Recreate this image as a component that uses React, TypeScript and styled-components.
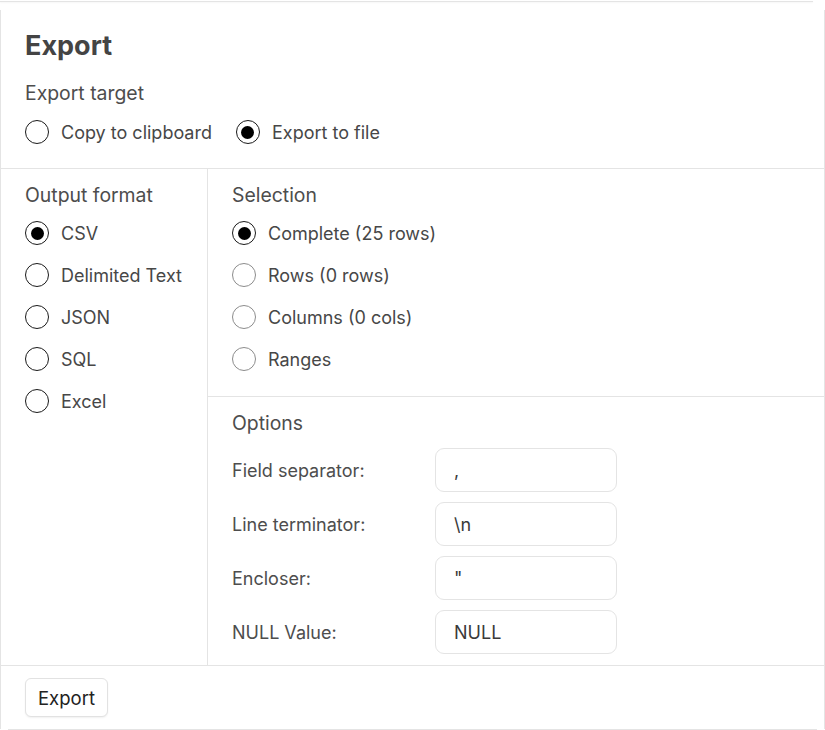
import React from "react";
import styled, { createGlobalStyle } from "styled-components";

const Global = createGlobalStyle`
  html, body { margin: 0; padding: 0; background: #fff; }
  body { font-family: Inter, "Noto Sans", sans-serif; color: #444; }
  * { box-sizing: border-box; }
`;

const Page = styled.div`
  width: 825px;
  height: 730px;
  display: flex;
  flex-direction: column;
  overflow: hidden;
`;

const TopRule = styled.div`
  height: 2px;
  margin-right: 12px;
  border-bottom: 1px solid #e4e4e4;
  box-shadow: 0 1px 2px rgba(0, 0, 0, 0.04);
`;

const Card = styled.div`
  margin-top: 8px;
  border-left: 1px solid #e4e4e4;
  border-right: 1px solid #e4e4e4;
  display: flex;
  flex-direction: column;
`;

const Header = styled.section`
  padding: 21px 24px 23px 24px;
  border-bottom: 1px solid #e4e4e4;
`;

const Title = styled.h1`
  margin: 0;
  font-size: 27px;
  line-height: 30px;
  font-weight: 700;
  color: #444;
`;

const GroupLabel = styled.div<{ $mt?: number }>`
  font-size: 19.4px;
  line-height: 26px;
  font-weight: 400;
  color: #4d4d4d;
  margin-top: ${(p) => p.$mt ?? 0}px;
`;

const InlineRadios = styled.div`
  display: flex;
  gap: 24px;
  margin-top: 13px;
`;

const RadioStack = styled.div`
  display: flex;
  flex-direction: column;
  gap: 16px;
  margin-top: 12px;
`;

const RadioRow = styled.label`
  display: flex;
  align-items: center;
  gap: 12px;
  height: 26px;
  font-size: 18px;
  color: #474747;
`;

const Circle = styled.span<{ $checked?: boolean; $muted?: boolean }>`
  width: 24px;
  height: 24px;
  border-radius: 50%;
  border: ${(p) => (p.$muted ? "1px solid #8c8c8c" : "1.5px solid #1a1a1a")};
  display: flex;
  align-items: center;
  justify-content: center;
  flex-shrink: 0;
  &::after {
    content: "";
    display: ${(p) => (p.$checked ? "block" : "none")};
    width: 13px;
    height: 13px;
    border-radius: 50%;
    background: #000;
  }
`;

const Body = styled.div`
  display: grid;
  grid-template-columns: 207px 1fr;
  border-bottom: 1px solid #e4e4e4;
  height: 497px;
`;

const LeftCol = styled.div`
  border-right: 1px solid #e4e4e4;
  padding: 13px 0 0 24px;
`;

const RightCol = styled.div`
  display: flex;
  flex-direction: column;
`;

const SelectionBlock = styled.div`
  padding: 13px 24px 24px 24px;
  border-bottom: 1px solid #e4e4e4;
`;

const OptionsBlock = styled.div`
  padding: 13px 24px 11px 24px;
`;

const OptionGrid = styled.div`
  display: grid;
  grid-template-columns: 203px 182px;
  row-gap: 10px;
  margin-top: 12px;
  align-items: center;
`;

const OptionLabel = styled.span`
  font-size: 18px;
  color: #4d4d4d;
`;

const TextBox = styled.div`
  height: 44px;
  border: 1px solid #e4e4e4;
  border-radius: 9px;
  padding: 0 18px;
  display: flex;
  align-items: center;
  font-size: 18px;
  color: #3a3a3a;
`;

const Footer = styled.div`
  padding: 12px 24px 12px 24px;
`;

const Button = styled.button`
  font-family: Inter, "Noto Sans", sans-serif;
  font-size: 18.5px;
  color: #222;
  background: #fff;
  border: 1px solid #e2e2e2;
  border-radius: 6px;
  height: 39px;
  padding: 0 12px;
  box-shadow: 0 1px 2px rgba(0, 0, 0, 0.06);
`;

const BottomRule = styled.div`
  height: 1px;
  margin: 0 8px 0 8px;
  background: #e4e4e4;
`;

const Radio = ({ label, checked, muted }: { label: string; checked?: boolean; muted?: boolean }) => (
  <RadioRow>
    <Circle $checked={checked} $muted={muted} />
    {label}
  </RadioRow>
);

export default function App() {
  const formats = ["CSV", "Delimited Text", "JSON", "SQL", "Excel"];
  const options: [string, string][] = [
    ["Field separator:", ","],
    ["Line terminator:", "\\n"],
    ["Encloser:", '"'],
    ["NULL Value:", "NULL"],
  ];
  return (
    <>
      <Global />
      <Page>
        <TopRule />
        <Card>
          <Header>
            <Title>Export</Title>
            <GroupLabel $mt={19}>Export target</GroupLabel>
            <InlineRadios>
              <Radio label="Copy to clipboard" />
              <Radio label="Export to file" checked />
            </InlineRadios>
          </Header>
          <Body>
            <LeftCol>
              <GroupLabel>Output format</GroupLabel>
              <RadioStack>
                {formats.map((f, i) => (
                  <Radio key={f} label={f} checked={i === 0} />
                ))}
              </RadioStack>
            </LeftCol>
            <RightCol>
              <SelectionBlock>
                <GroupLabel>Selection</GroupLabel>
                <RadioStack>
                  <Radio label="Complete (25 rows)" checked />
                  <Radio label="Rows (0 rows)" muted />
                  <Radio label="Columns (0 cols)" muted />
                  <Radio label="Ranges" muted />
                </RadioStack>
              </SelectionBlock>
              <OptionsBlock>
                <GroupLabel>Options</GroupLabel>
                <OptionGrid>
                  {options.map(([l, v]) => (
                    <React.Fragment key={l}>
                      <OptionLabel>{l}</OptionLabel>
                      <TextBox>{v}</TextBox>
                    </React.Fragment>
                  ))}
                </OptionGrid>
              </OptionsBlock>
            </RightCol>
          </Body>
          <Footer>
            <Button>Export</Button>
          </Footer>
        </Card>
        <BottomRule />
      </Page>
    </>
  );
}
